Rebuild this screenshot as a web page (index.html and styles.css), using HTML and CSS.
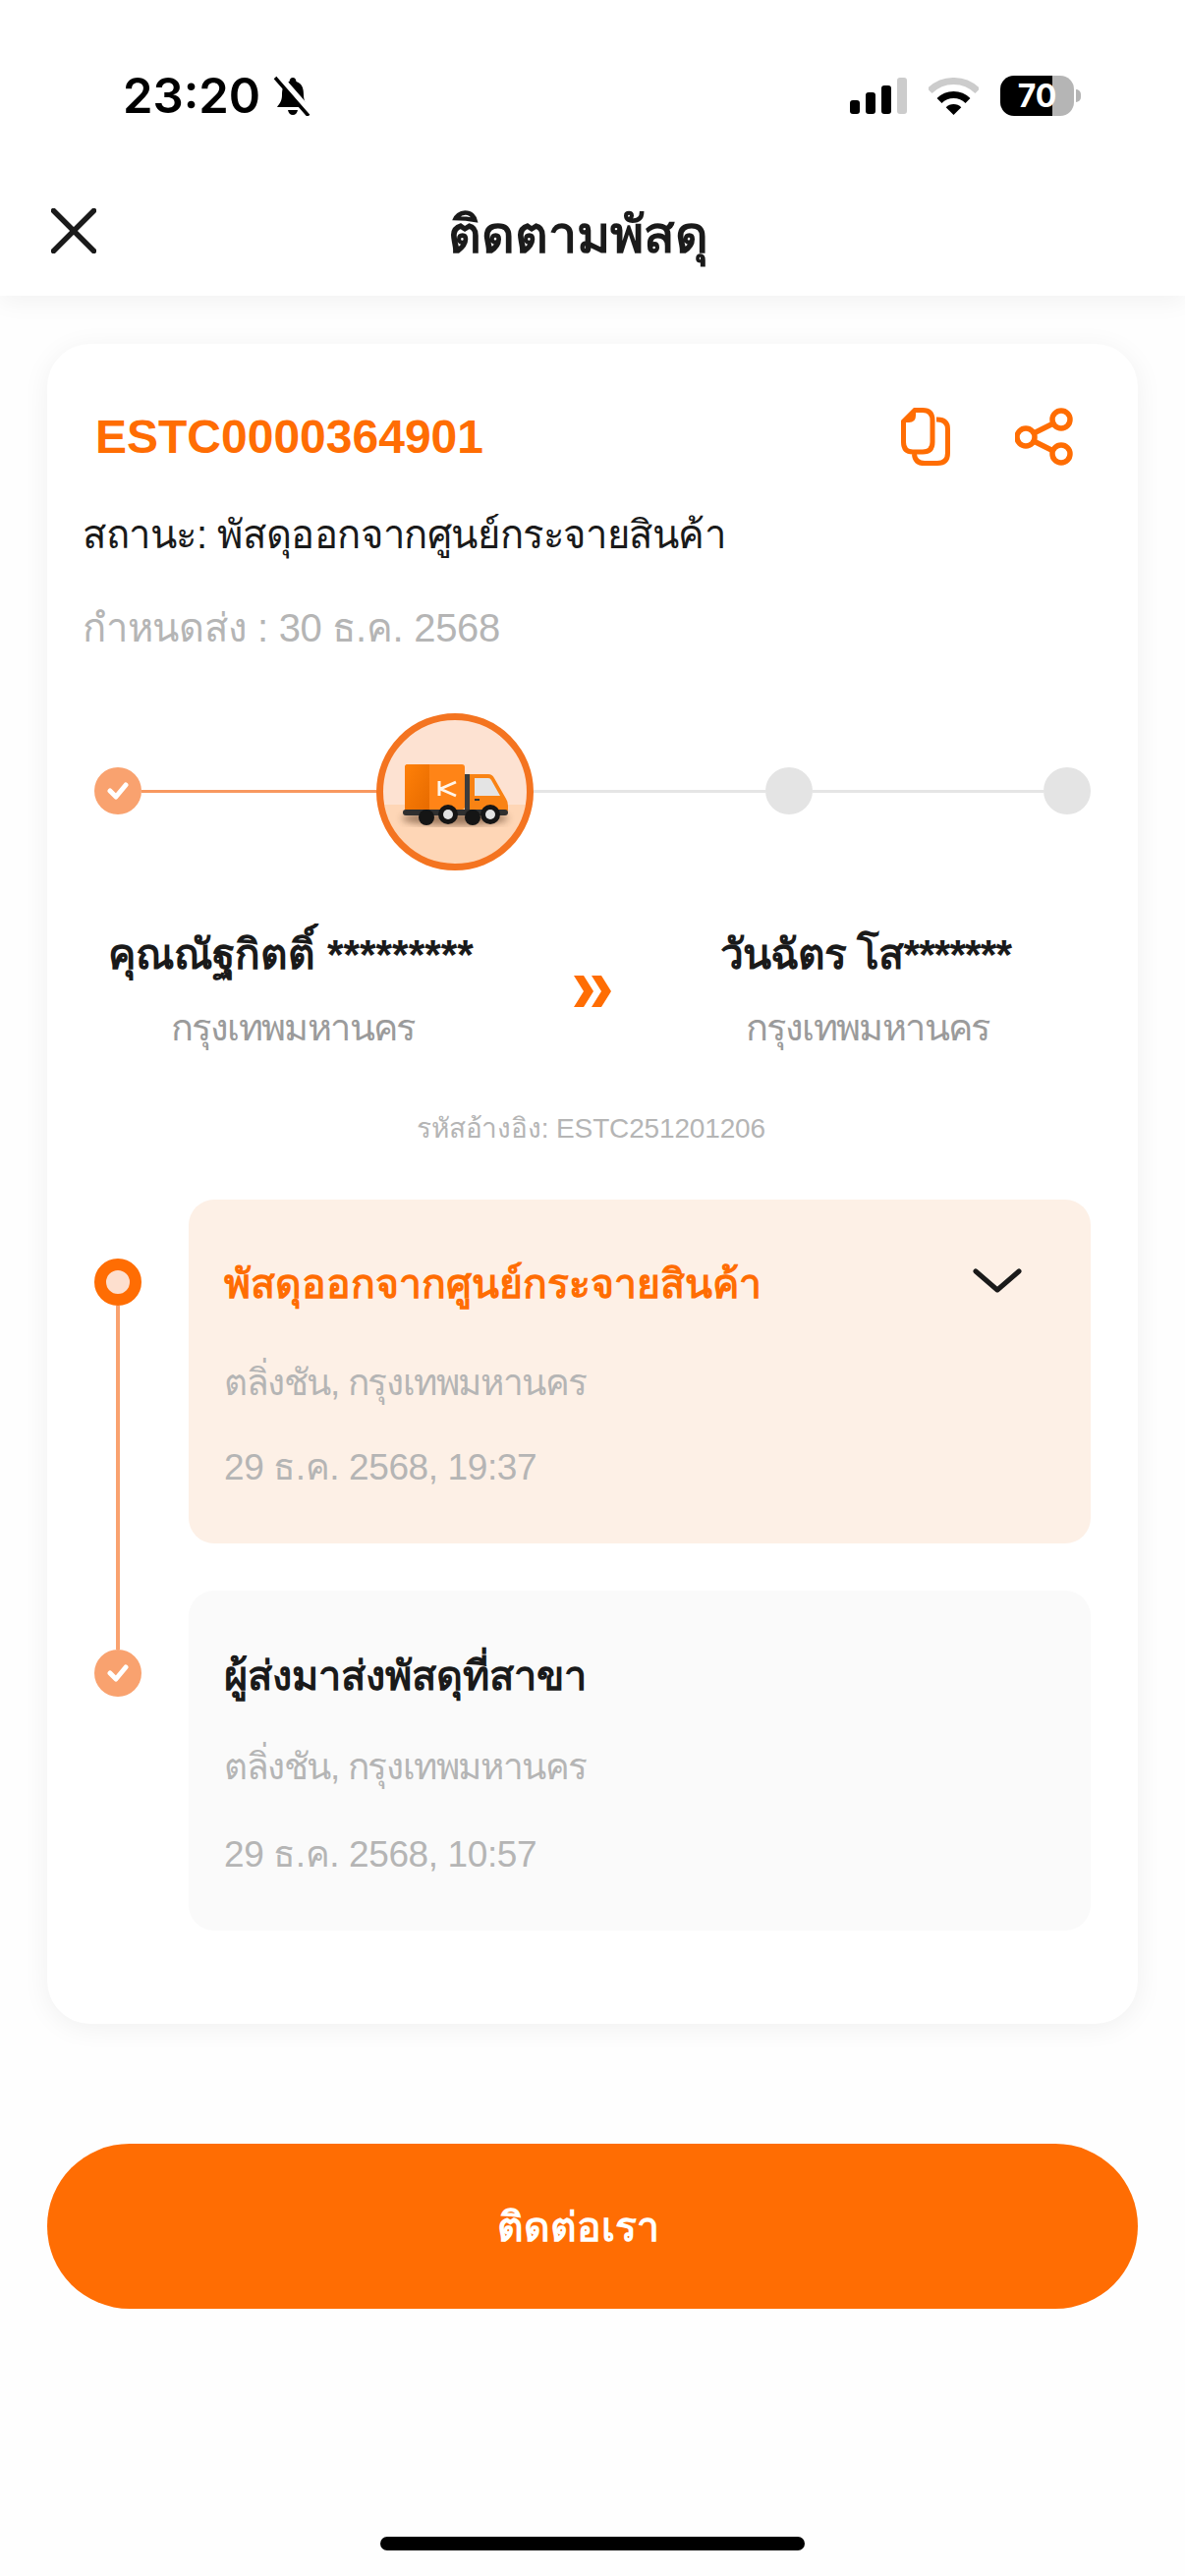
FILE: index.html
```html
<!DOCTYPE html>
<html lang="th">
<head>
  <meta charset="UTF-8">
  <meta name="viewport" content="width=device-width, initial-scale=1.0">
  <title>ติดตามพัสดุ</title>
  <link rel="stylesheet" href="styles.css">
</head>
<body>
  <header class="top">
    <!-- Status bar -->
    <div class="status-bar">
      <span class="time">23:20</span>
      <svg class="bell" width="40" height="41" viewBox="0 0 40 41">
        <path d="M20 2Q23 2 23.5 6C30 8 31 14 31 20C31 26 34 29 36 32H4C6 29 9 26 9 20C9 14 10 8 16.5 6Q17 2 20 2Z" fill="#000"/>
        <path d="M15 35H25Q24 40 20 40Q16 40 15 35Z" fill="#000"/>
        <path d="M5 0L39 39" stroke="#fff" stroke-width="7"/>
        <path d="M2 2L36 41" stroke="#000" stroke-width="3.5"/>
      </svg>
      <div class="status-icons">
        <svg width="58" height="37" viewBox="0 0 58 37">
          <rect x="0" y="23" width="10" height="14" rx="3" fill="#000"/>
          <rect x="16" y="15" width="10" height="22" rx="3" fill="#000"/>
          <rect x="32" y="8" width="10" height="29" rx="3" fill="#000"/>
          <rect x="48" y="0" width="10" height="37" rx="3" fill="#ccc"/>
        </svg>
        <svg width="51" height="38" viewBox="0 0 51 38">
          <path d="M1.1 13.6A34.5 34.5 0 0 1 49.9 13.6" fill="none" stroke="#ccc" stroke-width="7"/>
          <path d="M11 23.5A20.5 20.5 0 0 1 40 23.5" fill="none" stroke="#000" stroke-width="7"/>
          <path d="M25.5 38L17.7 30.2A11 11 0 0 1 33.3 30.2Z" fill="#000"/>
        </svg>
        <div class="battery"><span>70</span></div>
      </div>
    </div>

    <nav class="nav">
      <svg class="close" width="46" height="46" viewBox="0 0 46 46">
        <path d="M2.5 2.5L43.5 43.5M43.5 2.5L2.5 43.5" stroke="#1a1a1a" stroke-width="5.5" stroke-linecap="round"/>
      </svg>
      <h1>ติดตามพัสดุ</h1>
    </nav>
  </header>

  <main class="page">
    <section class="card">
      <div class="card-head">
        <span class="code">ESTC0000364901</span>
        <div class="actions">
          <!-- copy -->
          <svg width="50" height="59" viewBox="0 0 50 59" fill="none" stroke="#ff6d03" stroke-width="5">
            <path d="M14 2.5H22Q32 2.5 32 13V35Q32 45 22 45H12Q2.5 45 2.5 35V14Z"/>
            <path d="M14 2.5L2.5 14H8Q14 14 14 8Z" fill="#ff6d03" stroke-width="2"/>
            <path d="M36 12H37Q47.5 12 47.5 22V46Q47.5 56.5 37 56.5H24Q14 56.5 13.5 47"/>
          </svg>
          <!-- share -->
          <svg width="59" height="59" viewBox="0 0 59 59" fill="none" stroke="#ff6d03" stroke-width="5.5">
            <circle cx="47" cy="12" r="9"/>
            <circle cx="47" cy="47" r="9"/>
            <circle cx="11" cy="30" r="9"/>
            <path d="M19 26L39 16M19 34L39 44"/>
          </svg>
        </div>
      </div>
      <p class="status">สถานะ: พัสดุออกจากศูนย์กระจายสินค้า</p>
      <p class="due">กำหนดส่ง : 30 ธ.ค. 2568</p>

      <div class="stepper">
        <span class="dot done">
          <svg width="22" height="18" viewBox="0 0 22 18"><path d="M3 9L9 15L19 3" fill="none" stroke="#fff" stroke-width="5" stroke-linecap="round" stroke-linejoin="round"/></svg>
        </span>
        <span class="line active"></span>
        <span class="truck-badge">
          <svg width="146" height="146" viewBox="0 0 146 146">
            <defs>
              <linearGradient id="box" x1="0" y1="0" x2="1" y2="1">
                <stop offset="0" stop-color="#ff8008"/>
                <stop offset="1" stop-color="#e76b00"/>
              </linearGradient>
              <filter id="soft"><feGaussianBlur stdDeviation="3.5"/></filter>
            </defs>
            <ellipse cx="73" cy="100" rx="54" ry="7" fill="#6b4a30" opacity=".65" filter="url(#soft)"/>
            <rect x="22" y="45" width="61" height="46" rx="3" fill="#ff8417"/>
            <path d="M25 45H47V91H22V48Q22 45 25 45Z" fill="url(#box)"/>
            <path d="M57 62V77M58 70L74 63M58 70L74 77" fill="none" stroke="#fff5ea" stroke-width="3"/>
            <rect x="83" y="55" width="5" height="38" fill="#3c3c3c"/>
            <path d="M88 55H107Q111 55 113 59L125 80Q127 83 127 87V92H88Z" fill="#f98314"/>
            <path d="M93 59H107Q109 59 110 61L119 77H93Z" fill="#e4e4e4"/>
            <rect x="93" y="80" width="5" height="2" fill="#333"/>
            <rect x="20" y="91" width="107" height="6" rx="3" fill="#2f2f2f"/>
            <circle cx="44" cy="99" r="8" fill="#151515"/>
            <circle cx="91" cy="99" r="8" fill="#151515"/>
            <circle cx="66" cy="96" r="10" fill="#151515"/>
            <circle cx="109" cy="96" r="10" fill="#151515"/>
            <circle cx="66" cy="96" r="5" fill="#e2e2e2"/>
            <circle cx="109" cy="96" r="5" fill="#e2e2e2"/>
          </svg>
        </span>
        <span class="line"></span>
        <span class="dot todo"></span>
        <span class="line"></span>
        <span class="dot todo"></span>
      </div>

      <div class="parties">
        <div class="party">
          <p class="party-name">คุณณัฐกิตติ์ *********</p>
          <p class="party-city">กรุงเทพมหานคร</p>
        </div>
        <svg class="arrows" width="41" height="32" viewBox="0 0 41 32">
          <path d="M2 0H12L22 16L12 32H2L12 16Z M20 0H30L40 16L30 32H20L30 16Z" fill="#ff6d03"/>
        </svg>
        <div class="party">
          <p class="party-name tight">วันฉัตร โส*******</p>
          <p class="party-city">กรุงเทพมหานคร</p>
        </div>
      </div>

      <p class="ref">รหัสอ้างอิง: ESTC251201206</p>

      <div class="timeline">
        <div class="event current">
          <div class="rail">
            <span class="rail-dot"></span>
            <span class="rail-line"></span>
          </div>
          <div class="event-box">
            <div class="event-title">
              <span>พัสดุออกจากศูนย์กระจายสินค้า</span>
              <svg class="chevron" width="50" height="25" viewBox="0 0 50 25"><path d="M3 3L25 22L47 3" fill="none" stroke="#1a1a1a" stroke-width="5" stroke-linecap="round" stroke-linejoin="round"/></svg>
            </div>
            <p class="event-place">ตลิ่งชัน, กรุงเทพมหานคร</p>
            <p class="event-date">29 ธ.ค. 2568, 19:37</p>
          </div>
        </div>
        <div class="event">
          <div class="rail">
            <span class="dot done">
              <svg width="22" height="18" viewBox="0 0 22 18"><path d="M3 9L9 15L19 3" fill="none" stroke="#fff" stroke-width="5" stroke-linecap="round" stroke-linejoin="round"/></svg>
            </span>
          </div>
          <div class="event-box">
            <div class="event-title"><span>ผู้ส่งมาส่งพัสดุที่สาขา</span></div>
            <p class="event-place">ตลิ่งชัน, กรุงเทพมหานคร</p>
            <p class="event-date">29 ธ.ค. 2568, 10:57</p>
          </div>
        </div>
      </div>
    </section>

    <button class="btn">ติดต่อเรา</button>
    <div class="home-bar"></div>
  </main>
</body>
</html>
```

FILE: styles.css
```css
* {
  margin: 0;
  padding: 0;
  box-sizing: border-box;
}
body {
  font-family: "Liberation Sans", "Noto Sans", sans-serif;
  color: #1a1a1a;
  background-color: #fefefe;
  height: 2622px;
  overflow: hidden;
}
.top {
  height: 301px;
  background-color: #fff;
  box-shadow: 0 6px 24px rgba(0, 0, 0, 0.05);
  position: relative;
}
.status-bar {
  height: 140px;
  padding: 77px 106px 0 125px;
  display: flex;
  align-items: flex-start;
}
.time {
  font-family: Inter, sans-serif;
  font-weight: 600;
  font-size: 49px;
  line-height: 41px;
  color: #000;
}
.bell {
  margin-left: 13px;
}
.status-icons {
  margin-left: auto;
  display: flex;
  align-items: flex-start;
  gap: 22px;
  padding-top: 2px;
}
.battery {
  width: 75px;
  height: 41px;
  margin-top: -2px;
  margin-right: 7px;
  border-radius: 14px;
  background: linear-gradient(to right, #000 70.6%, #b5b5b5 70.6%);
  display: flex;
  align-items: center;
  justify-content: center;
  position: relative;
}
.battery span {
  font-family: Inter, sans-serif;
  font-weight: 700;
  font-size: 32px;
  color: #fff;
}
.battery::after {
  content: "";
  position: absolute;
  right: -7px;
  top: 14px;
  width: 5px;
  height: 13px;
  border-radius: 0 6px 6px 0;
  background-color: #b5b5b5;
}
.nav {
  height: 161px;
  padding: 28px 0 0 52px;
  display: flex;
  align-items: center;
}
.nav h1 {
  margin-left: 358px;
  margin-top: 8px;
  font-size: 52px;
  font-weight: bold;
  white-space: nowrap;
}

.page {
  padding: 49px 48px 0;
}
.card {
  height: 1710px;
  padding: 65px 48px 0 36px;
  background-color: #fff;
  border-radius: 44px;
  box-shadow: 0 4px 28px rgba(0, 0, 0, 0.06);
}
.card-head {
  margin-left: 13px;
  padding-right: 18px;
  display: flex;
  justify-content: space-between;
  align-items: center;
}
.code {
  font-size: 48px;
  font-weight: bold;
  color: #ff6d03;
}
.actions {
  display: flex;
  gap: 66px;
}
.status {
  margin-top: 40px;
  font-size: 40px;
  line-height: 60px;
  letter-spacing: -0.4px;
}
.due {
  margin-top: 40px;
  font-size: 40px;
  line-height: 50px;
  letter-spacing: -0.3px;
  color: #b5b5b5;
}

/* progress steps */
.stepper {
  margin: 60px 0 0 12px;
  display: flex;
  align-items: center;
}
.dot {
  width: 48px;
  height: 48px;
  border-radius: 50%;
  flex-shrink: 0;
  display: flex;
  align-items: center;
  justify-content: center;
}
.dot.done {
  background-color: #f9a26f;
}
.dot.todo {
  background-color: #e4e4e4;
}
.line {
  flex: 1;
  height: 3px;
  background-color: #e5e5e5;
}
.line.active {
  flex: 0 0 239px;
  background-color: #f89860;
}
.truck-badge {
  width: 160px;
  height: 160px;
  margin-top: 2px;
  flex-shrink: 0;
  border: 7px solid #f47420;
  border-radius: 50%;
  background: linear-gradient(to bottom, #fde2d2 59%, #fed6b6 59%);
  overflow: hidden;
}
.truck-badge svg {
  display: block;
}

.parties {
  margin-top: 61px;
  display: grid;
  grid-template-columns: 424px 188px 370px;
  align-items: center;
  justify-items: center;
}
.party {
  text-align: center;
  white-space: nowrap;
}
.party-name {
  font-size: 42.5px;
  font-weight: bold;
  line-height: 50px;
}
.party-name.tight {
  letter-spacing: -0.9px;
}
.party-city {
  margin-top: 24px;
  padding-left: 4px;
  font-size: 38px;
  line-height: 50px;
  letter-spacing: -1.6px;
  color: #9b9b9b;
}
.ref {
  margin-top: 58px;
  font-size: 28px;
  line-height: 40px;
  letter-spacing: -0.15px;
  text-align: center;
  color: #b5b5b5;
  padding-left: 9px;
}

/* history */
.timeline {
  margin: 52px 0 0 12px;
  display: flex;
  flex-direction: column;
  gap: 48px;
}
.event {
  display: flex;
  gap: 48px;
}
.rail {
  width: 48px;
  flex-shrink: 0;
  padding-top: 60px;
  position: relative;
}
.rail-dot {
  display: block;
  width: 48px;
  height: 48px;
  border-radius: 50%;
  border: 12px solid #ff6d03;
  background-color: #fddfce;
}
.rail-line {
  position: absolute;
  left: 22px;
  top: 108px;
  bottom: -108px;
  width: 4px;
  background-color: #f9a26f;
}
.event-box {
  flex: 1;
  padding: 57px 0 52px 36px;
  border-radius: 26px;
  background-color: #fafafa;
}
.event.current .event-box {
  padding-top: 56px;
  background-color: #fdf0e6;
}
.event-title {
  display: flex;
  justify-content: space-between;
  align-items: center;
  padding-right: 70px;
  font-size: 41.5px;
  font-weight: bold;
  line-height: 60px;
}
.event.current .event-title {
  font-size: 41px;
  color: #ff6d03;
}
.chevron {
  margin-top: -8px;
}
.event-place {
  margin-top: 38px;
  font-size: 37px;
  line-height: 50px;
  letter-spacing: -1.4px;
  color: #b5b5b5;
}
.event-date {
  margin-top: 39px;
  font-size: 37px;
  line-height: 50px;
  letter-spacing: -0.4px;
  color: #b5b5b5;
}
.event.current .event-place {
  margin-top: 46px;
}
.event.current .event-date {
  margin-top: 36px;
}

.btn {
  display: block;
  width: 100%;
  height: 168px;
  margin-top: 122px;
  padding-right: 30px;
  border: none;
  border-radius: 84px;
  background-color: #ff6d03;
  color: #fff;
  font-family: inherit;
  font-size: 41px;
  font-weight: bold;
}
.home-bar {
  width: 432px;
  height: 14px;
  margin: 232px auto 0;
  border-radius: 7px;
  background-color: #000;
}
```
